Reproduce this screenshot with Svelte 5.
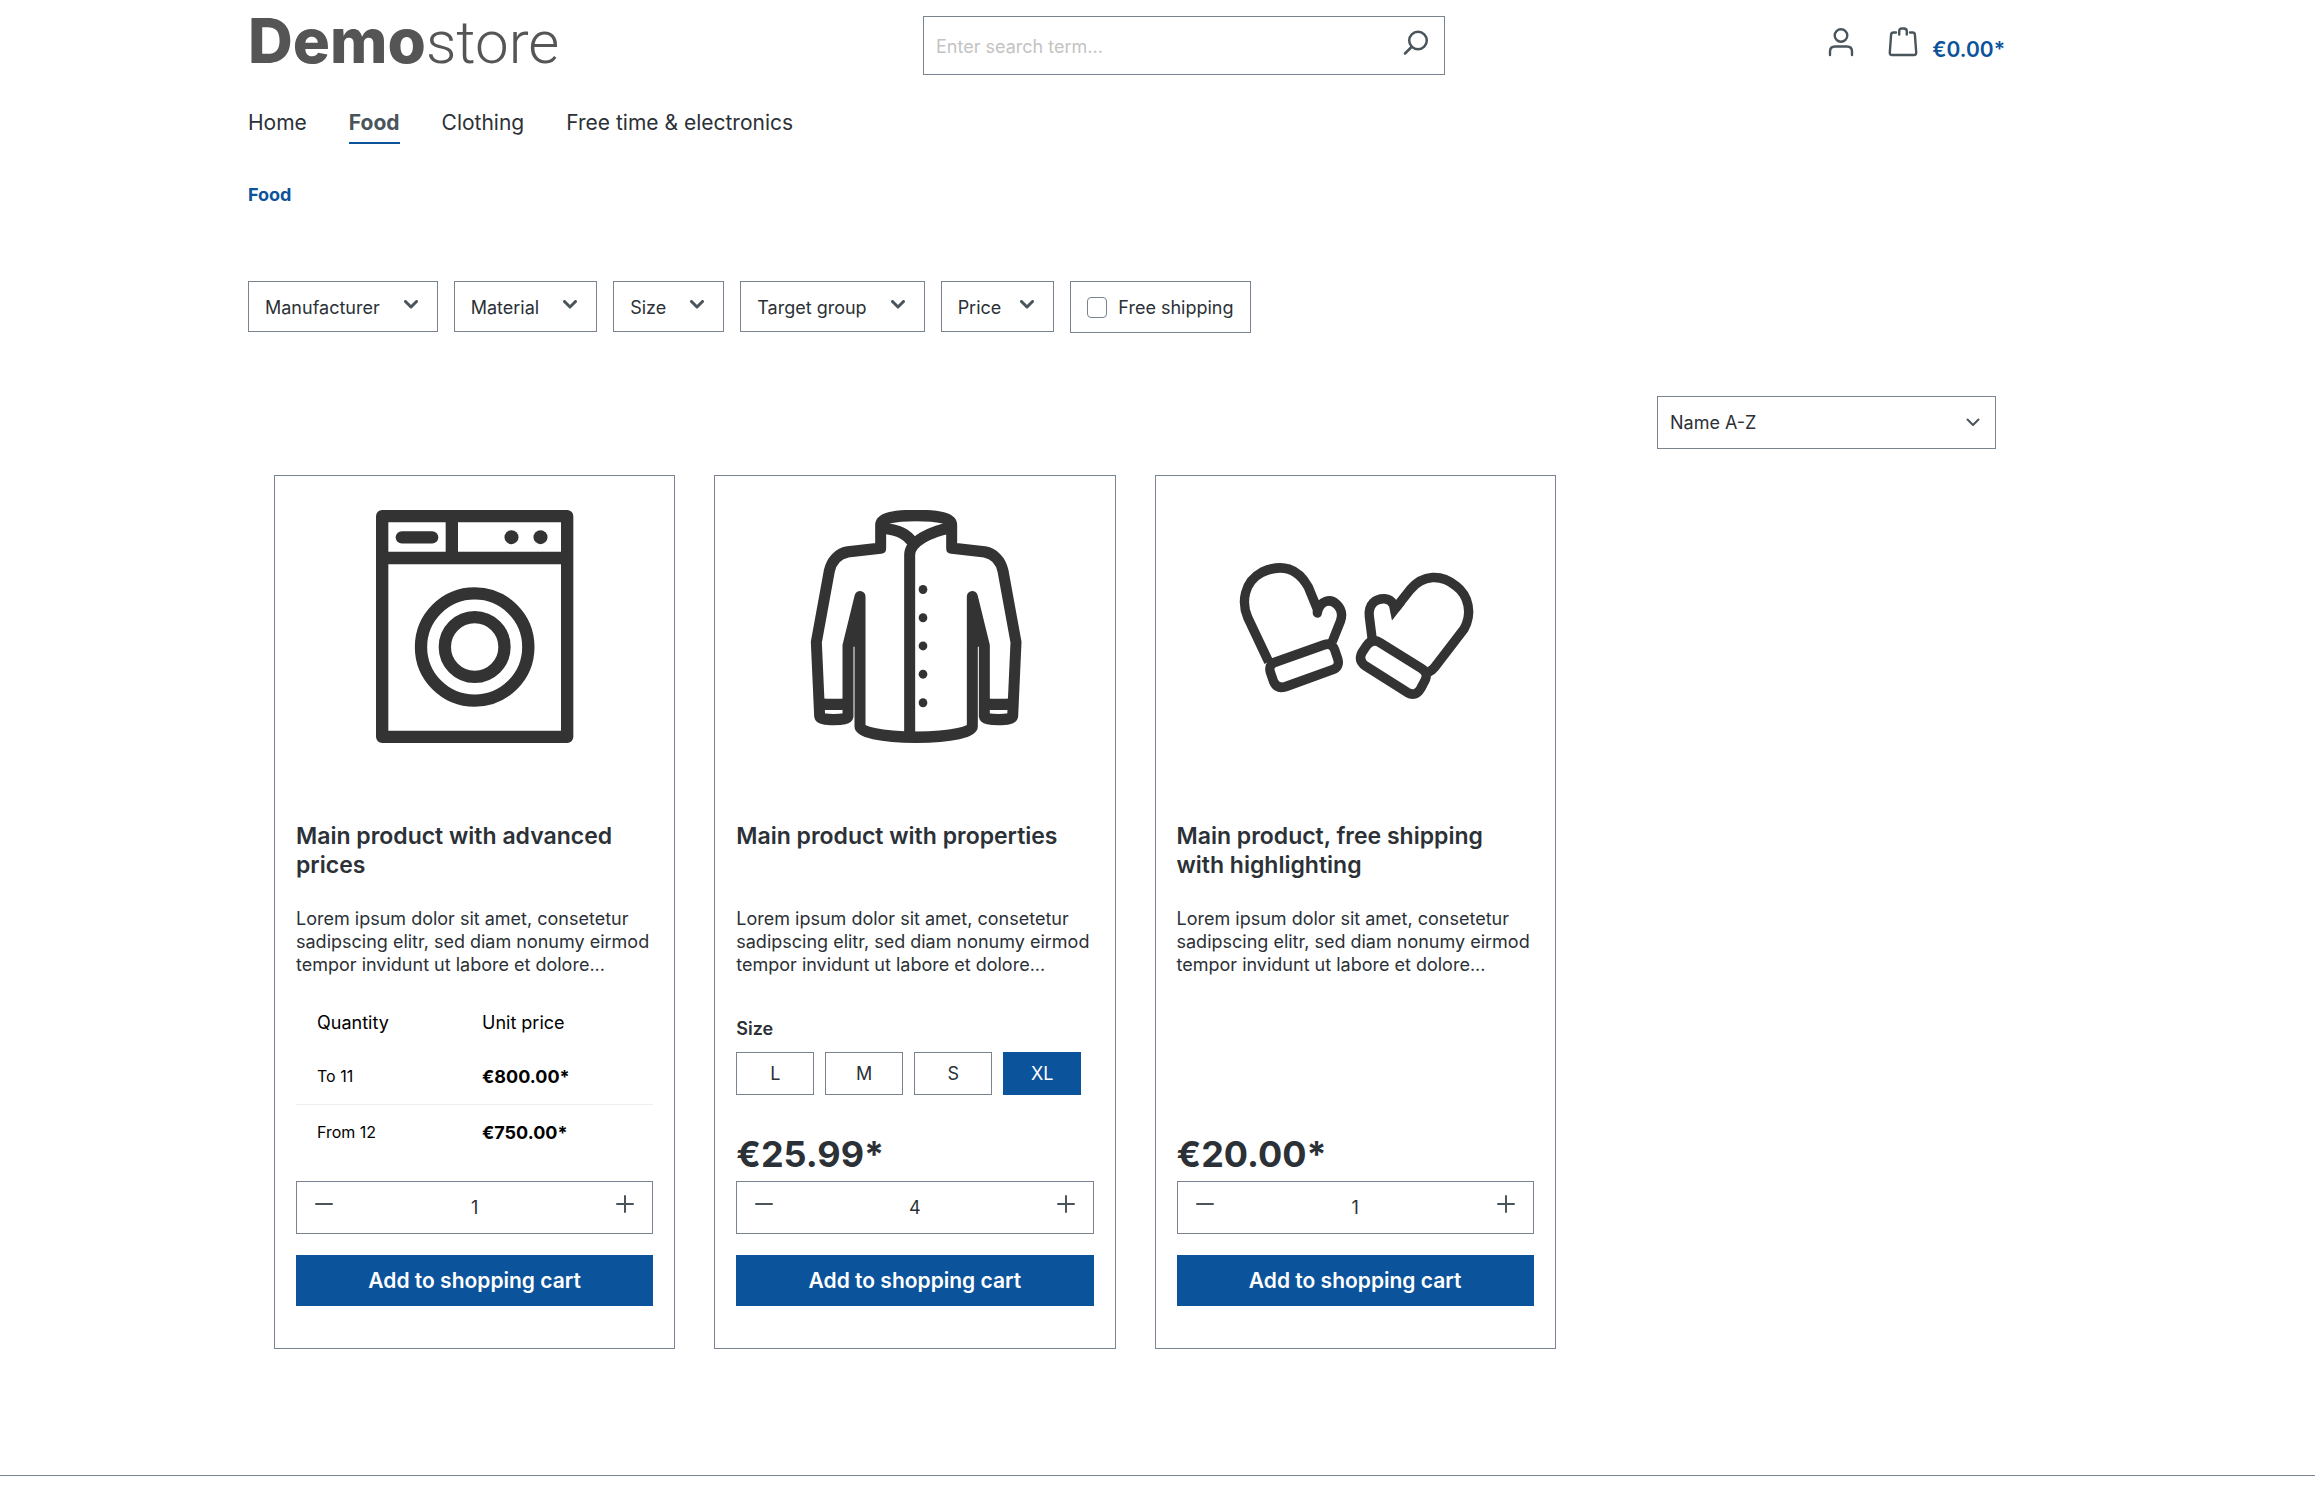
<script lang="ts">
  const navItems = ["Home", "Food", "Clothing", "Free time & electronics"];
  const filters = ["Manufacturer", "Material", "Size", "Target group", "Price"];
  const description =
    "Lorem ipsum dolor sit amet, consetetur sadipscing elitr, sed diam nonumy eirmod tempor invidunt ut labore et dolore...";

  let activeNav = $state("Food");
  let search = $state("");
  let freeShipping = $state(false);
  let sorting = $state("name-asc");

  let products = $state([
    {
      id: "washer",
      name: "Main product with advanced prices",
      quantity: 1,
      tiers: [
        { label: "To 11", price: "€800.00*" },
        { label: "From 12", price: "€750.00*" }
      ]
    },
    {
      id: "jacket",
      name: "Main product with properties",
      quantity: 4,
      price: "€25.99*",
      sizes: ["L", "M", "S", "XL"],
      size: "XL"
    },
    {
      id: "mittens",
      name: "Main product, free shipping with highlighting",
      quantity: 1,
      price: "€20.00*"
    }
  ]);

  function decrease(product) {
    if (product.quantity > 1) product.quantity -= 1;
  }
</script>

<!-- one half of the jacket, the other one is mirrored -->
{#snippet jacketHalf()}
  <path d="M646 162Q753 162 753 190V257L852 268C880 273 900 293 907 323L946 530L936 745Q934 755 893 755Q853 755 851 745V540L815 398V775C815 789 760 806 646 806" />
  <path d="M851 709Q893 712 936 709" />
  <path class="solid" d="M815 398L851 540L833 543H815z" />
{/snippet}

{#snippet chevron(weight)}
  <svg class="chevron" viewBox="0 0 14 9" aria-hidden="true">
    <path d="M1.5 1.5L7 7L12.5 1.5" stroke-width={weight} />
  </svg>
{/snippet}

<div class="container">
  <header>
    <a class="logo" href="#home"><b>Demo</b><span>store</span></a>

    <form class="search" onsubmit={(e) => e.preventDefault()}>
      <input type="search" placeholder="Enter search term..." aria-label="Enter search term" bind:value={search} />
      <button aria-label="Search">
        <svg viewBox="0 0 26 26" aria-hidden="true">
          <circle cx="15" cy="10.5" r="8.8" />
          <path d="M8.5 17L2 23.5" />
        </svg>
      </button>
    </form>

    <div class="actions">
      <button class="account" aria-label="Your account">
        <svg viewBox="0 0 26 30" aria-hidden="true">
          <circle cx="13" cy="8.5" r="6.3" />
          <path d="M2 28V24.500Q2 19.500 7 19.500H19Q24 19.500 24 24.500V28" />
        </svg>
      </button>
      <a class="cart" href="#cart">
        <svg viewBox="0 0 30 30" aria-hidden="true">
          <path d="M8 5.500H5.500Q3.300 5.500 3.100 7.700L1.800 25.500Q1.700 28 4 28H26Q28.300 28 28.200 25.500L26.900 7.700Q26.700 5.500 24.500 5.500H22" />
          <path d="M11.200 7.500V4.500Q11.200 1.500 14 1.500H16Q18.800 1.500 18.800 4.500V7.500" />
        </svg>
        <span>€0.00*</span>
      </a>
    </div>
  </header>

  <nav aria-label="Main">
    {#each navItems as item}
      <a href="#{item}" class:active={activeNav === item} onclick={() => (activeNav = item)}>{item}</a>
    {/each}
  </nav>

  <div class="breadcrumb"><a href="#Food">Food</a></div>

  <div class="filters">
    {#each filters as filter}
      <button class="filter" class:narrow={filter === "Price"}>
        <span>{filter}</span>
        {@render chevron(3)}
      </button>
    {/each}
    <label class="filter shipping">
      <input type="checkbox" bind:checked={freeShipping} />
      <span>Free shipping</span>
    </label>
  </div>

  <main>
    <div class="sorting">
      <div class="select">
        <select aria-label="Sorting" bind:value={sorting}>
          <option value="name-asc">Name A-Z</option>
          <option value="name-desc">Name Z-A</option>
        </select>
        {@render chevron(2)}
      </div>
    </div>

    <div class="listing">
      {#each products as product}
        <article class="card">
          <div class="image">
            {#if product.id === "washer"}
              <svg viewBox="238 151 810 700" stroke-width="37" aria-hidden="true">
                <rect x="364.500" y="169.500" width="555" height="662" />
                <path d="M365 295H919M573.500 170V295" />
                <path d="M423.500 233H514.500" stroke-linecap="round" />
                <circle cx="642" cy="562" r="161" />
                <circle cx="642" cy="562" r="89.500" />
                <circle class="solid" cx="752.500" cy="232.500" r="21" />
                <circle class="solid" cx="839.500" cy="232.500" r="21" />
              </svg>
            {:else if product.id === "jacket"}
              <svg viewBox="238 151 810 700" stroke-width="33" aria-hidden="true">
                <g transform="scale(1 1.033)">
                  {@render jacketHalf()}
                  <g transform="translate(1293 0) scale(-1 1)">{@render jacketHalf()}</g>
                  <path d="M545 198C600 206 618 216 636 240" />
                  <path d="M750 198C690 208 627 238 627 277V803" />
                  {#each [377, 459, 541, 623, 706] as y}
                    <circle class="solid" cx="667" cy={y} r="13" />
                  {/each}
                </g>
              </svg>
            {:else}
              <svg viewBox="241 151 810 700" stroke-width="28" aria-hidden="true">
                <g transform="scale(1 1.033)">
                  <path d="M387 587L324 458C305 415 312 355 367 327C428 300 475 315 506 370L533 434V445C540 408 573 402 591 420C607 435 609 452 602 470L578 528" />
                  <path d="M407 588L553 538Q576 530 585 552L594 578Q602 602 578 610L438 659Q412 667 402 645L393 620Q384 596 407 588z" />
                  <path d="M698 525L689 455C685 420 708 403 735 404C748 405 756 411 761 420" />
                  <path d="M768 431L812 377C850 333 905 332 948 366C989 396 998 448 973 492L885 603Q878 612 865 618" />
                  <path class="solid" d="M748 425L757 467L795 420L770 408z" />
                  <path d="M722 532L845 606Q868 620 855 643L843 665Q828 690 803 676L676 598Q655 583 667 560L681 540Q698 517 722 532z" />
                </g>
              </svg>
            {/if}
          </div>

          <h2>{product.name}</h2>
          <p class="description">{description}</p>

          <div class="details">
            {#if product.tiers}
              <table>
                <thead>
                  <tr><th>Quantity</th><th>Unit price</th></tr>
                </thead>
                <tbody>
                  {#each product.tiers as tier}
                    <tr><td>{tier.label}</td><td class="tier-price">{tier.price}</td></tr>
                  {/each}
                </tbody>
              </table>
            {/if}
            {#if product.sizes}
              <div class="size-label">Size</div>
              <div class="sizes">
                {#each product.sizes as size}
                  <button class:selected={product.size === size} onclick={() => (product.size = size)}>{size}</button>
                {/each}
              </div>
            {/if}
            {#if product.price}
              <div class="price">{product.price}</div>
            {/if}
          </div>

          <div class="quantity">
            <button aria-label="Decrease quantity" onclick={() => decrease(product)}>
              <svg viewBox="0 0 18 18" aria-hidden="true"><path d="M1 9H17" /></svg>
            </button>
            <input inputmode="numeric" aria-label="Quantity" bind:value={product.quantity} />
            <button aria-label="Increase quantity" onclick={() => (product.quantity += 1)}>
              <svg viewBox="0 0 18 18" aria-hidden="true"><path d="M1 9H17M9 1V17" /></svg>
            </button>
          </div>
          <button class="buy">Add to shopping cart</button>
        </article>
      {/each}
    </div>
  </main>
</div>

<footer></footer>

<style>
  :global(body) {
    margin: 0;
    background: #fff;
    color: #2b3136;
    font-family: Inter, "Liberation Sans", sans-serif;
    font-size: 18px;
    line-height: 27px;
  }

  .container {
    max-width: 1774px;
    margin: 0 auto;
    padding-right: 45px;
  }

  button, input, select {
    font: inherit;
    color: inherit;
    margin: 0;
    border-radius: 0;
    box-sizing: border-box;
  }

  button {
    padding: 0;
    border: none;
    background: none;
    cursor: pointer;
  }

  a {
    color: inherit;
    text-decoration: none;
  }

  svg {
    display: block;
    fill: none;
    stroke: #4a545b;
    stroke-linecap: round;
    stroke-linejoin: round;
  }

  .solid {
    fill: #333;
    stroke: none;
  }

  header {
    display: grid;
    grid-template-columns: 675px 522px 1fr;
    align-items: start;
    padding-top: 16px;
  }

  .logo {
    color: #555;
    font-size: 62px;
    line-height: 50px;
  }

  .logo b {
    font-weight: 800;
  }

  .logo span {
    font-family: Roboto, sans-serif;
    font-size: 60px;
    font-weight: 300;
  }

  .search {
    display: flex;
    height: 59px;
    box-sizing: border-box;
    border: 1px solid #798490;
  }

  .search input {
    flex: 1;
    min-width: 0;
    padding: 2px 12px 0;
    border: none;
    outline: none;
    appearance: none;
    background: none;
  }

  .search input::placeholder {
    color: #c3c3c3;
    opacity: 1;
  }

  .search button {
    padding: 0 15px 6px;
  }

  .search svg {
    width: 26px;
    height: 26px;
    stroke-width: 2.5;
  }

  .actions {
    display: flex;
    justify-content: flex-end;
    align-items: flex-start;
    gap: 34px;
    padding: 11px 17px 0 0;
  }

  .account svg {
    width: 26px;
    height: 30px;
    stroke-width: 2.4;
  }

  .cart {
    display: flex;
    gap: 14px;
    color: #0b539b;
    font-size: 21px;
    font-weight: 600;
  }

  .cart svg {
    width: 30px;
    height: 30px;
    stroke-width: 2.4;
  }

  .cart span {
    padding-top: 9px;
  }

  nav {
    display: flex;
    gap: 42px;
    padding-top: 32px;
    font-size: 21px;
    line-height: 31px;
  }

  nav a {
    padding-bottom: 4px;
    border-bottom: 2px solid transparent;
  }

  nav a.active {
    border-color: #0b539b;
    color: #4a545b;
    font-weight: 700;
  }

  .breadcrumb {
    margin-top: 37px;
    color: #0b539b;
    font-weight: 700;
  }

  .filters {
    display: flex;
    flex-wrap: wrap;
    align-items: flex-start;
    gap: 16px;
    margin-top: 73px;
  }

  .filter {
    display: flex;
    align-items: center;
    gap: 24px;
    padding: 12px 19px 10px 16px;
    border: 1px solid #798490;
  }

  .filter.narrow {
    gap: 19px;
  }

  .chevron {
    width: 14px;
    height: 9px;
  }

  .filter .chevron {
    margin-bottom: 7px;
  }

  .filter.shipping {
    gap: 11px;
    padding: 12px 16px 11px;
  }

  .shipping input {
    appearance: none;
    width: 20px;
    height: 21px;
    border: 1px solid #798490;
    border-radius: 4px;
  }

  .shipping input:checked {
    background: #0b539b;
  }

  main {
    padding: 63px 26px 0;
  }

  .sorting {
    display: flex;
    justify-content: flex-end;
    margin-bottom: 26px;
  }

  .select {
    position: relative;
    width: 339px;
  }

  .select select {
    width: 100%;
    height: 53px;
    padding: 0 40px 0 12px;
    appearance: none;
    border: 1px solid #798490;
    background: #fff;
  }

  .select .chevron {
    position: absolute;
    top: 22px;
    right: 16px;
    pointer-events: none;
  }

  .listing {
    display: grid;
    grid-template-columns: repeat(4, minmax(0, 1fr));
    gap: 39px;
  }

  .card {
    padding: 34px 21px 42px;
    border: 1px solid #798490;
  }

  .image svg {
    width: 270px;
    max-width: 100%;
    margin: 0 auto;
    stroke: #333;
    stroke-linecap: butt;
  }

  h2 {
    min-height: 58px;
    margin: 79px 0 0;
    font-size: 23px;
    font-weight: 600;
    line-height: 29px;
  }

  .description {
    margin: 27px 0 0;
    line-height: 23px;
  }

  .details {
    display: flex;
    flex-direction: column;
    height: 180px;
    margin: 25px 0 0;
  }

  table {
    width: 100%;
    table-layout: fixed;
    border-collapse: collapse;
    color: #000;
  }

  th, td {
    padding: 0 0 0 21px;
    text-align: left;
    font-weight: 400;
  }

  th:first-child {
    width: 144px;
  }

  th {
    padding-top: 8px;
    padding-bottom: 13px;
  }

  td {
    height: 55px;
    font-size: 16px;
  }

  tbody tr + tr td {
    border-top: 1px solid #eee;
  }

  td.tier-price {
    font-size: 18px;
    font-weight: 700;
  }

  .size-label {
    margin-top: 14px;
    font-weight: 600;
  }

  .sizes {
    display: flex;
    gap: 11px;
    margin-top: 10px;
  }

  .sizes button {
    width: 78px;
    height: 43px;
    border: 1px solid #798490;
  }

  .sizes .selected {
    border-color: #0b539b;
    background: #0b539b;
    color: #fff;
  }

  .price {
    margin-top: auto;
    font-size: 36px;
    font-weight: 700;
    line-height: 54px;
  }

  .quantity {
    display: flex;
    height: 53px;
    box-sizing: border-box;
    border: 1px solid #798490;
  }

  .quantity input {
    flex: 1;
    min-width: 0;
    padding: 0;
    border: none;
    outline: none;
    background: none;
    text-align: center;
  }

  .quantity button {
    padding: 0 18px 8px;
  }

  .quantity svg {
    width: 18px;
    height: 18px;
    stroke-width: 2;
  }

  .buy {
    width: 100%;
    height: 51px;
    margin-top: 21px;
    background: #0b539b;
    color: #fff;
    font-size: 21px;
    font-weight: 600;
  }

  footer {
    height: 29px;
    margin-top: 126px;
    border-top: 1px solid #798490;
  }
</style>
